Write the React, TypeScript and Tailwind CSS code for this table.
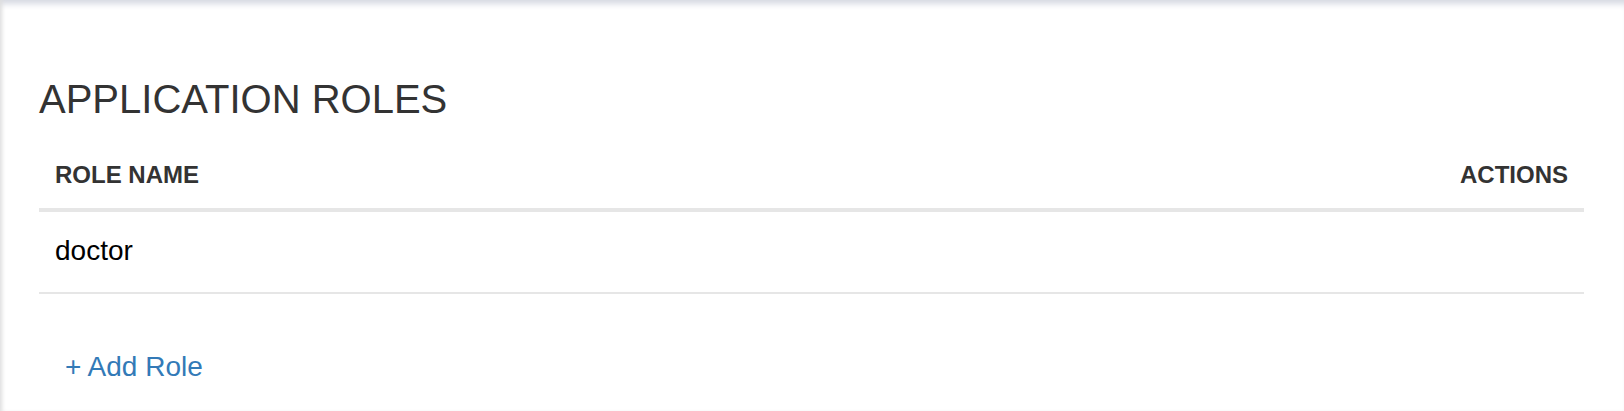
const roles = ["doctor"];

const App = () => {
  return (
    // page with the faint inset shadow along top and left edges
    <div
      className="h-[411px] w-full bg-white shadow-[inset_4px_0_4px_-2px_#dedede,inset_0_8px_6px_-4px_#d6d9e2]"
      style={{ fontFamily: '"Liberation Sans", Arial, sans-serif' }}
    >
      <div className="pl-[39px] pr-[40px] pt-[75px]">
        <h1 className="text-[40px] leading-[48px] font-normal text-[#333333]">APPLICATION ROLES</h1>

        <table className="w-full border-collapse">
          <thead>
            <tr className="border-b-4 border-[#e6e6e6]">
              <th className="pl-4 pt-[38px] pb-[19px] text-left text-[24px] leading-[28px] font-bold text-[#333333]">
                ROLE NAME
              </th>
              <th className="pr-4 pt-[38px] pb-[19px] text-right text-[24px] leading-[28px] font-bold text-[#333333]">
                ACTIONS
              </th>
            </tr>
          </thead>
          <tbody>
            {roles.map((role) => (
              <tr key={role} className="border-b-2 border-[#e6e6e6]">
                <td className="pl-4 pt-[23px] pb-[25px] text-[28px] leading-[32px] text-black">{role}</td>
                <td className="pr-4"></td>
              </tr>
            ))}
          </tbody>
        </table>

        <div className="mt-[57px] pl-[26px]">
          <a href="#" className="text-[28px] leading-[32px] text-[#337ab7]">
            + Add Role
          </a>
        </div>
      </div>
    </div>
  );
};

export default App;
